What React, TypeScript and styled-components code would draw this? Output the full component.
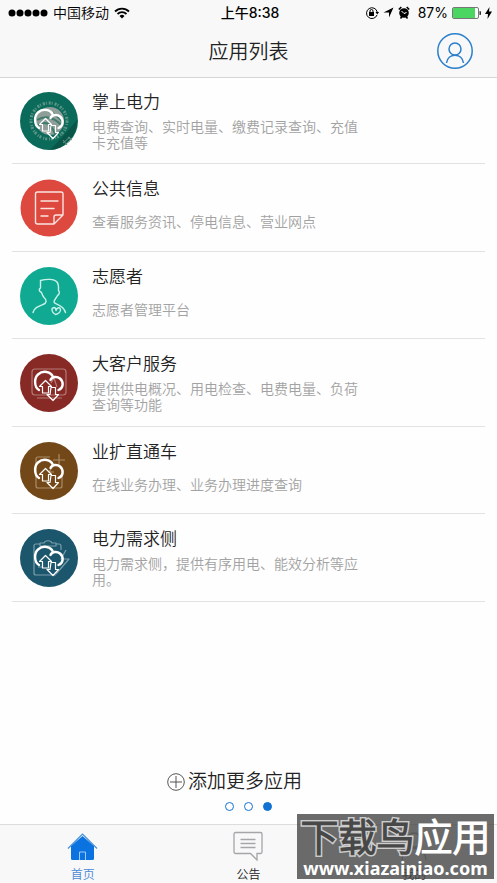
import React from "react";
import styled, { createGlobalStyle } from "styled-components";

const GlobalStyle = createGlobalStyle`
  *, *::before, *::after { box-sizing: border-box; }
  body {
    margin: 0;
    background: #fefefe;
    color: #222;
    font-family: "Liberation Sans", "Noto Sans CJK SC DemiLight", "Noto Sans CJK SC", sans-serif;
    font-weight: 350;
  }
  h1, h2, p, ul { margin: 0; padding: 0; font-weight: 350; }
  ul { list-style: none; }
  button { font: inherit; color: inherit; border: 0; padding: 0; background: none; cursor: pointer; }
  svg { display: block; flex: none; }
`;

const Page = styled.div`
  position: relative;
  display: flex;
  flex-direction: column;
  min-height: 100vh;
`;

const Header = styled.header`
  background: #f8f8f8;
  border-bottom: 1px solid #d6d6d6;
`;

const StatusBar = styled.div`
  display: grid;
  grid-template-columns: 1fr auto 1fr;
  align-items: center;
  height: 25px;
  padding: 0 5px 0 8px;
  color: #000;
  font-size: 14px;
  font-weight: 400;
  line-height: 24px;
`;

const StatusGroup = styled.div<{ $end?: boolean }>`
  display: flex;
  align-items: center;
  justify-content: ${(p) => (p.$end ? "flex-end" : "flex-start")};
  gap: ${(p) => (p.$end ? 4 : 5)}px;
`;

const Clock = styled.time`
  font-weight: 500;
  font-family: "Inter", "Noto Sans CJK SC", sans-serif;
`;

const Percent = styled.span`
  font-family: "Inter", sans-serif;
  margin-left: 4px;
`;

const NavBar = styled.div`
  display: grid;
  grid-template-columns: 1fr auto 1fr;
  align-items: center;
  height: 52px;
  padding-right: 24px;
  padding-left: 24px;
`;

const NavTitle = styled.h1`
  grid-column: 2;
  padding-top: 2px;
  font-size: 20px;
  line-height: 28px;
`;

const ProfileButton = styled.button`
  justify-self: end;
`;

const AppList = styled.ul`
  margin: -1px 12px 0;
`;

const AppRow = styled.li`
  display: flex;
  gap: 14px;
  min-height: 87px;
  padding: 15px 8px 12px;
  border-bottom: 1px solid #e2e2e2;

  &:nth-child(even) { min-height: 88px; }
`;

const AppText = styled.div`
  flex: 1;
  max-width: 275px;
  margin-top: -1px;
`;

const AppName = styled.h2`
  font-size: 17px;
  line-height: 24px;
`;

const AppDescription = styled.p`
  display: flex;
  align-items: center;
  min-height: 32px;
  margin-top: 4px;
  color: #a2a2a2;
  font-size: 14px;
  line-height: 16px;
`;

const MoreSection = styled.section`
  display: flex;
  flex-direction: column;
  align-items: center;
  gap: 6px;
  margin-top: auto;
  padding: 24px 0 13px;
`;

const AddButton = styled.button`
  display: flex;
  align-items: center;
  gap: 3px;
  margin-right: 28px;
  font-size: 19px;
  line-height: 28px;
`;

const Dots = styled.div`
  display: flex;
  gap: 10px;
`;

const Dot = styled.button<{ $active?: boolean }>`
  && {
    width: 9px;
    height: 9px;
    border: 1px solid #1272d2;
    border-radius: 50%;
    background: ${(p) => (p.$active ? "#1272d2" : "#fff")};
  }
`;

const TabBar = styled.nav`
  display: grid;
  grid-template-columns: repeat(3, 1fr);
  height: 59px;
  border-top: 1px solid #dcdcdc;
  background: #f8f8f8;
`;

const Tab = styled.button<{ $active?: boolean }>`
  && {
    display: flex;
    flex-direction: column;
    align-items: center;
    gap: 6px;
    padding-top: 6px;
    color: ${(p) => (p.$active ? "#4a8ad4" : "#222")};
    font-size: 12px;
    font-weight: 400;
    line-height: 16px;
  }
`;

const Watermark = styled.aside`
  position: absolute;
  right: 3px;
  bottom: 4px;
  display: flex;
  flex-direction: column;
  align-items: center;
  width: 197px;
  height: 65px;
  padding-top: 2px;
  background: rgba(70, 70, 70, 0.8);
  color: #fff;
  pointer-events: none;
`;

const WatermarkName = styled.div`
  font-size: 38px;
  font-weight: 900;
  line-height: 44px;
  white-space: nowrap;
`;

const Outlined = styled.span`
  color: #484848;
  -webkit-text-stroke: 3px #ccc;
  paint-order: stroke fill;
`;

const WatermarkSite = styled.div`
  font-family: "Noto Sans", sans-serif;
  font-size: 18px;
  font-weight: 700;
  line-height: 16px;
`;

const CloudTransfer = () => (
  <g fill="none" stroke="#fff" strokeLinejoin="round" strokeLinecap="round">
    <path
      strokeWidth="2.400"
      d="M19 36C14 33 14 24 18 20.500C23 16 31 17.500 33 23M30.500 26C32 22.500 37 22 40 24.500C44 28 43.500 34 38.500 36"
    />
    <path strokeWidth="1.200" d="M25.500 26.500l6 6h-3v6.500h-6v-6.500h-3z" />
    <path strokeWidth="1.200" d="M31 33.500h4.500v7h3L33 46.500l-6-6h3z" />
  </g>
);

const EmblemIcon = () => (
  <svg width="58" height="58" viewBox="0 0 58 58">
    <circle cx="29" cy="29" r="29" fill="#0b6b5b" />
    <path d="M57 28A29 29 0 0 1 30 58L44 43z" fill="#095649" />
    <circle cx="30" cy="29" r="14" fill="#8f9e98" />
    <path d="M17 28C25 23 34 24 44 36M18 33C27 28 31 32 35 42M24 17C32 20 39 24 43 31" fill="none" stroke="#3d7b6b" strokeWidth="2" />
    <circle cx="29" cy="29" r="18" fill="none" stroke="#5f9587" strokeWidth="3" strokeDasharray="2 1 1 2" />
    <path d="M43 51l7-6M45 53l7-7M43 48l4 5M48 45l4 3" stroke="#64958a" fill="none" />
    <CloudTransfer />
  </svg>
);

const NoteIcon = () => (
  <svg width="58" height="58" viewBox="0 0 58 58">
    <circle cx="29" cy="29" r="28.5" fill="#dd493e" />
    <g fill="none" stroke="#fbe4e0" strokeWidth="1.4" strokeLinejoin="round" strokeLinecap="round">
      <path d="M34 45H17.500a2 2 0 0 1-2-2V15a2 2 0 0 1 2-2h23.500a2 2 0 0 1 2 2v21zM34 45v-7a2 2 0 0 1 2-2h7" />
      <path d="M21 22h17M21 29.500h13M21 37h7" />
    </g>
  </svg>
);

const VolunteerIcon = () => (
  <svg width="58" height="58" viewBox="0 0 58 58">
    <circle cx="29" cy="29" r="29" fill="#10aa92" />
    <g fill="none" stroke="#c9f2e9" strokeWidth="1.400" strokeLinejoin="round" strokeLinecap="round">
      <path d="M13 45.500C14 41 18 39.500 23 37.500C27 36 27 33 24 30.500C22.500 29 22 27 21.500 25.500C19 24.500 18.500 22 20.500 21V13.500C26 12 34 11.500 37 15C39 17.500 38.500 21 38.500 23.500C40 25 39.500 27.500 37.500 28.500C36.500 31 34 32.500 34 35C35 38 43 37 45.500 45.500" />
      <path d="M35.500 47.500C31 45 31 41 34 40.500C36 40.500 36 42 36 43.500C37 40 40 40 40.500 42.500C41 45 38 47 35.500 47.500z" />
    </g>
  </svg>
);

const MonitorIcon = () => (
  <svg width="58" height="58" viewBox="0 0 58 58">
    <circle cx="29" cy="29" r="29" fill="#872a26" />
    <g fill="none" stroke="#b57a75" strokeWidth="1.200">
      <rect x="12" y="15" width="34" height="26" rx="3" />
      <path d="M17 44h25M31 29l3-5 3 9" />
    </g>
    <CloudTransfer />
  </svg>
);

const ExpandIcon = () => (
  <svg width="58" height="58" viewBox="0 0 58 58">
    <circle cx="29" cy="29" r="29" fill="#734819" />
    <g fill="none" stroke="#aa8b68" strokeWidth="1.200">
      <path d="M30 15H18a2 2 0 0 0-2 2v27a2 2 0 0 0 2 2h22a2 2 0 0 0 2-2V28" />
      <path d="M39 12v12M33 18h12M33 24l-4 6h5" />
    </g>
    <CloudTransfer />
  </svg>
);

const DemandIcon = () => (
  <svg width="58" height="58" viewBox="0 0 58 58">
    <circle cx="29" cy="29" r="29" fill="#1c566d" />
    <g fill="none" stroke="#7c9dab" strokeWidth="1.200" strokeLinejoin="round">
      <path d="M20 15h-4a2 2 0 0 0-2 2v27a2 2 0 0 0 2 2h20M36 15h3a2 2 0 0 1 2 2v4M20 17v-3h4c1-3 7-3 8 0h4v3z" />
      <path d="M46 21l-5 9h8L36 45M18 38h4" />
    </g>
    <CloudTransfer />
  </svg>
);

const apps = [
  { name: "掌上电力", description: "电费查询、实时电量、缴费记录查询、充值卡充值等", Icon: EmblemIcon },
  { name: "公共信息", description: "查看服务资讯、停电信息、营业网点", Icon: NoteIcon },
  { name: "志愿者", description: "志愿者管理平台", Icon: VolunteerIcon },
  { name: "大客户服务", description: "提供供电概况、用电检查、电费电量、负荷查询等功能", Icon: MonitorIcon },
  { name: "业扩直通车", description: "在线业务办理、业务办理进度查询", Icon: ExpandIcon },
  { name: "电力需求侧", description: "电力需求侧，提供有序用电、能效分析等应用。", Icon: DemandIcon },
];

const SignalDots = () => (
  <svg width="40" height="8" viewBox="0 0 40 8">
    {[4, 12, 20, 28, 36].map((x) => (
      <circle key={x} cx={x} cy="4" r="3.500" />
    ))}
  </svg>
);

const WifiIcon = () => (
  <svg width="16" height="12" viewBox="0 0 16 12">
    <path d="M1 4.500a10 10 0 0 1 14 0M3.500 7a6.500 6.500 0 0 1 9 0" fill="none" stroke="#000" strokeWidth="1.800" />
    <path d="M5.500 9a3.600 3.600 0 0 1 5 0L8 11.500z" />
  </svg>
);

const RotationLockIcon = () => (
  <svg width="14" height="14" viewBox="0 0 14 14">
    <path d="M12 9A5.400 5.400 0 1 1 12.200 6" fill="none" stroke="#000" />
    <path d="M10.500 6H14l-1.700 2.500z" />
    <rect x="4" y="6" width="5" height="4" />
    <path d="M5 6.500V5a1.500 1.500 0 0 1 3 0v1.500" fill="none" stroke="#000" />
  </svg>
);

const LocationIcon = () => (
  <svg width="11" height="11" viewBox="0 0 11 11">
    <path d="M10.500 .5L6 10.500V5.500H.5z" />
  </svg>
);

const AlarmIcon = () => (
  <svg width="12" height="13" viewBox="0 0 12 13">
    <circle cx="6" cy="7" r="4.800" />
    <path d="M.8 3.500L3.300 1M11.200 3.500L8.700 1M2.500 12.500l1.500-2M9.500 12.500L8 10.500" stroke="#000" strokeWidth="1.600" />
    <path d="M3.500 5L6 7.500l2.500-1" fill="none" stroke="#fff" />
  </svg>
);

const BatteryIcon = () => (
  <svg width="29" height="12" viewBox="0 0 29 12">
    <rect x=".5" y=".5" width="26" height="11" rx="1.500" fill="#fff" stroke="#777" />
    <rect x="1" y="1" width="22" height="10" fill="#4bd662" />
    <path d="M27.500 4a2 2 0 0 1 0 4z" fill="#333" />
  </svg>
);

const BoltIcon = () => (
  <svg width="7" height="12" viewBox="0 0 7 12">
    <path d="M4.500 0L0 7h3L2.500 12 7 4.500H4z" />
  </svg>
);

const ProfileIcon = () => (
  <svg width="36" height="36" viewBox="0 0 36 36" fill="none" stroke="#2b7fcb" strokeWidth="1.500">
    <circle cx="18" cy="18" r="17.200" />
    <circle cx="18" cy="16" r="6" />
    <path d="M9.500 30c1.500-10.500 15.500-10.500 17 0" />
  </svg>
);

const PlusIcon = () => (
  <svg width="18" height="18" viewBox="0 0 18 18" fill="none" stroke="#555">
    <circle cx="9" cy="9" r="8.300" />
    <path d="M9 3v12M3 9h12" />
  </svg>
);

const HomeIcon = () => (
  <svg width="31" height="30" viewBox="0 0 31 30">
    <path d="M15.500 5L27 15v12.500a1.500 1.500 0 0 1-1.500 1.500h-20A1.500 1.500 0 0 1 4 27.500V15z" fill="#0b73e0" />
    <path d="M1 17.500L15.500 3 30 17.500" fill="none" stroke="#438fdc" strokeWidth="1.200" />
    <path d="M12.500 29v-8h6v8" fill="none" stroke="#9bccff" />
  </svg>
);

const NoticeIcon = () => (
  <svg width="30" height="30" viewBox="0 0 30 30" fill="none" stroke="#a5a5aa" strokeWidth="1.300">
    <path d="M2.500 1.500h25a1.500 1.500 0 0 1 1.500 1.500v18a1.500 1.500 0 0 1-1.500 1.500H24V29l-6.500-6.500h-15A1.500 1.500 0 0 1 1 21V3a1.500 1.500 0 0 1 1.500-1.500z" />
    <path d="M7.500 8.500h15M7.500 12.500h15M7.500 16.500h15" />
  </svg>
);

const PersonIcon = () => (
  <svg width="30" height="30" viewBox="0 0 30 30" fill="none" stroke="#a5a5aa" strokeWidth="1.300">
    <circle cx="15" cy="9" r="7" />
    <path d="M3 29c1-16 23-16 24 0" />
  </svg>
);

export default function App() {
  return (
    <Page>
      <GlobalStyle />
      <Header>
        <StatusBar>
          <StatusGroup>
            <SignalDots />
            <span>中国移动</span>
            <WifiIcon />
          </StatusGroup>
          <Clock>上午8:38</Clock>
          <StatusGroup $end>
            <RotationLockIcon />
            <LocationIcon />
            <AlarmIcon />
            <Percent>87%</Percent>
            <BatteryIcon />
            <BoltIcon />
          </StatusGroup>
        </StatusBar>
        <NavBar>
          <NavTitle>应用列表</NavTitle>
          <ProfileButton type="button" aria-label="个人中心">
            <ProfileIcon />
          </ProfileButton>
        </NavBar>
      </Header>
      <main>
        <AppList>
          {apps.map(({ name, description, Icon }) => (
            <AppRow key={name}>
              <Icon />
              <AppText>
                <AppName>{name}</AppName>
                <AppDescription>{description}</AppDescription>
              </AppText>
            </AppRow>
          ))}
        </AppList>
      </main>
      <MoreSection>
        <AddButton type="button">
          <PlusIcon />
          添加更多应用
        </AddButton>
        <Dots>
          <Dot type="button" aria-label="第1页" />
          <Dot type="button" aria-label="第2页" />
          <Dot type="button" aria-label="第3页" $active />
        </Dots>
      </MoreSection>
      <TabBar>
        <Tab type="button" $active>
          <HomeIcon />
          首页
        </Tab>
        <Tab type="button">
          <NoticeIcon />
          公告
        </Tab>
        <Tab type="button">
          <PersonIcon />
          我的
        </Tab>
      </TabBar>
      <Watermark>
        <WatermarkName>
          <Outlined>下载鸟</Outlined>应用
        </WatermarkName>
        <WatermarkSite>www.xiazainiao.com</WatermarkSite>
      </Watermark>
    </Page>
  );
}
